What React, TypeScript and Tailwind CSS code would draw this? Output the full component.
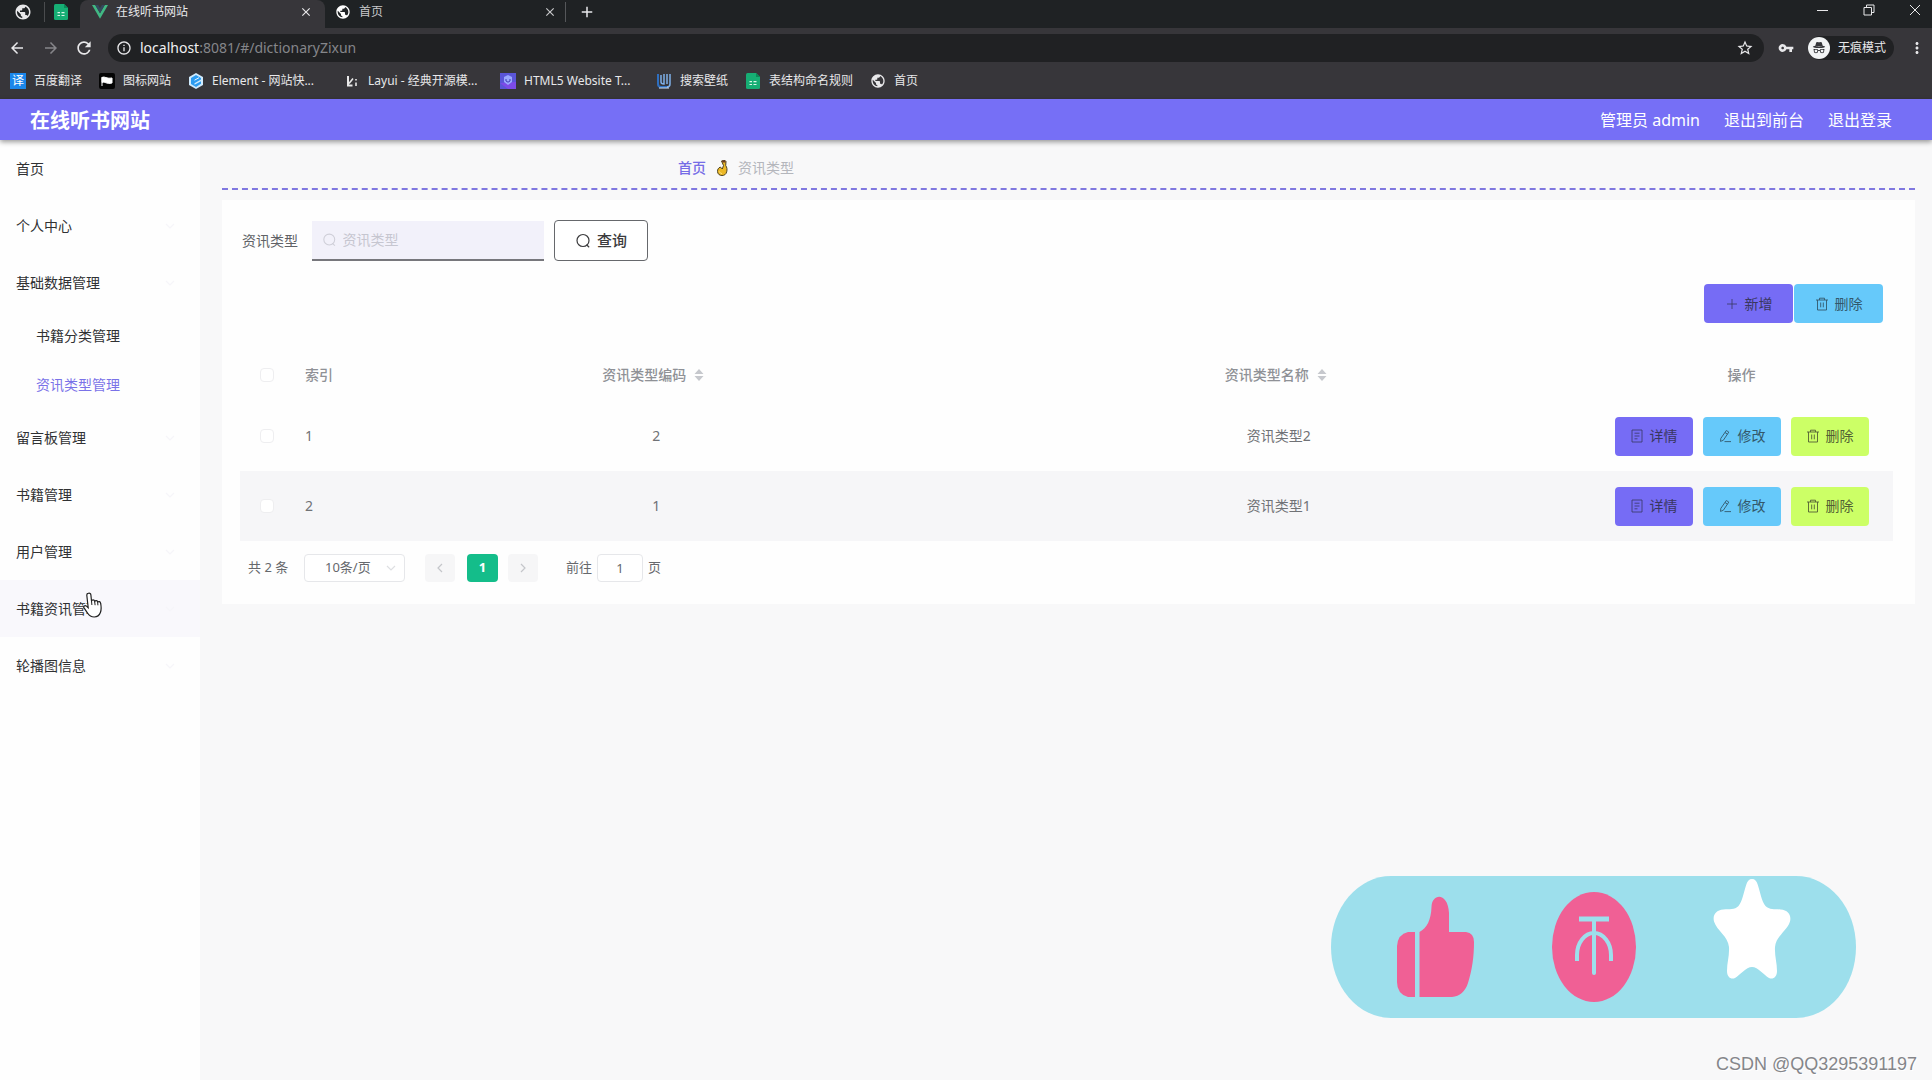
import clsx from 'clsx'
import type { ReactNode } from 'react'
import { BsIncognito } from 'react-icons/bs'
import {
  MdAdd,
  MdArrowBack,
  MdArrowForward,
  MdClose,
  MdInfoOutline,
  MdMoreVert,
  MdPublic,
  MdRefresh,
  MdStarBorder,
  MdVpnKey,
} from 'react-icons/md'

interface IconProps {
  className?: string
}

function VueIcon() {
  return (
    <svg viewBox="0 0 16 14" className="h-3.5 w-4">
      <path d="M0 0h3.2L8 8.3 12.8 0H16L8 13.8z" fill="#41b883" />
      <path d="M3.2 0h2.9L8 3.3 9.9 0h2.9L8 8.3z" fill="#34495e" />
    </svg>
  )
}

function SheetIcon() {
  return (
    <svg viewBox="0 0 16 16" className="size-4">
      <path d="M1 1.5Q1 0 2.500 0H11l4 4v10.500Q15 16 13.500 16h-11Q1 16 1 14.500z" fill="#16ae74" />
      <path d="M4.500 8.700h2.500M8.500 8.700h3M4.500 11.500h2.500M8.500 11.500h3" stroke="#d9f5e8" strokeWidth="1.200" />
      <path d="M11 0l4 4h-4z" fill="#0a8a58" />
    </svg>
  )
}

function FlagIcon() {
  return (
    <svg viewBox="0 0 16 16" className="size-4">
      <rect width="16" height="16" rx="2" fill="#050505" />
      <path d="M3 4v9M3 4.500c3-1.500 4 1.500 10 .5v5C7 11.500 6 8 3 9.500z" fill="#fff" stroke="#fff" />
    </svg>
  )
}

function ElementIcon() {
  return (
    <svg viewBox="0 0 16 16" className="size-4">
      <path d="M8 0l7 4v8l-7 4-7-4V4z" fill="#cfeafd" />
      <path d="M8 2l5 3v1.500L6.500 10.200v1.600L13 8.200v2.600L8 14l-5-3V5z" fill="#2b9bf0" />
      <path d="M6.500 7.200L11 4.700" stroke="#e9f6ff" />
    </svg>
  )
}

function LayuiIcon() {
  return (
    <svg viewBox="0 0 16 16" className="size-4" stroke="#e8e8e8" fill="none">
      <path d="M4 3v9.500h4.500" strokeWidth="2" />
      <path d="M5 10.500l4-5M12 6v1.500M12 9.500v3.500" strokeWidth="1.600" />
    </svg>
  )
}

function HtmlIcon() {
  return (
    <svg viewBox="0 0 16 16" className="size-4">
      <path d="M0 0h16v16H0z" fill="#5a55d8" />
      <path d="M0 10l8 6h8V9z" fill="#7d4be8" />
      <path d="M4 4l4-2 4 2v5l-4 3-4-3z" fill="#9aa8ff" />
      <path d="M6 6v2l2 1.200L10 8V6" stroke="#403bb5" fill="none" />
    </svg>
  )
}

function WallpaperIcon() {
  return (
    <svg viewBox="0 0 16 16" className="size-4" fill="none">
      <path d="M2 1v10q0 3 3 3h7" stroke="#2e6fc0" strokeWidth="2" />
      <path d="M5 2v7q0 2 3 2V1M11 1v10M14 1v10q0 3-3 3" stroke="#7fb0e8" strokeWidth="1.500" />
      <path d="M3 15h10" stroke="#d5e6f8" />
    </svg>
  )
}

function TranslateIcon() {
  return (
    <span className="flex size-4 items-center justify-center bg-[#1b87ea] text-xs leading-4 text-white">
      译
    </span>
  )
}

function SearchIcon({ className }: IconProps) {
  return (
    <svg viewBox="0 0 16 16" className={clsx('size-4', className)} fill="none" stroke="currentColor">
      <circle cx="8" cy="7.500" r="6" strokeWidth="1.200" />
      <path d="M11.500 11.800l2.700 2.500" strokeWidth="1.200" />
    </svg>
  )
}

function PlusIcon() {
  return (
    <svg viewBox="0 0 14 14" className="size-3.5" fill="none" stroke="currentColor">
      <path d="M7 2v10M2 7h10" strokeWidth=".8" />
    </svg>
  )
}

function TrashIcon() {
  return (
    <svg viewBox="0 0 14 14" className="size-3.5" fill="none" stroke="currentColor" strokeWidth=".9">
      <path d="M1 3h12M2.500 3v10h9V3M4.500 3V1.200h5V3M5.700 5.500v4.800M8.300 5.500v4.800" />
    </svg>
  )
}

function DocumentIcon() {
  return (
    <svg viewBox="0 0 14 14" className="size-3.5" fill="none" stroke="currentColor" strokeWidth=".8">
      <path d="M2 1h10v12H2zM4.500 4.200h5M4.500 7h5M4.500 9.800h3" />
    </svg>
  )
}

function EditIcon() {
  return (
    <svg viewBox="0 0 14 14" className="size-3.5" fill="none" stroke="currentColor" strokeWidth=".9">
      <path d="M8.300 1.500l2.500 1.600-5.500 8.200-2.800 1.100.3-3zM7 3.500l2.500 1.600M6.500 12.600H13" />
    </svg>
  )
}

function SortIcon() {
  return (
    <svg viewBox="0 0 10 12" className="h-3 w-2.5 fill-[#c6c8cd]">
      <path d="M5 0l4.500 5h-9zM5 12l4.500-5h-9z" />
    </svg>
  )
}

function ChevronIcon({ className }: IconProps) {
  return (
    <svg viewBox="0 0 12 12" className={clsx('size-3', className)} fill="none" stroke="currentColor">
      <path d="M2 4l4 4 4-4" strokeWidth="1.200" />
    </svg>
  )
}

function PouchIcon() {
  return (
    <svg viewBox="0 0 12 18" className="h-4.5 w-3">
      <path
        d="M5.500 2L9 1.500l1 1-.3 4c1.300 1.800 1.600 4 1 6.300-.7 2.700-2.500 3.700-4.700 3.700-2.500 0-4.300-1.500-4.500-4-.1-2 .8-3.500 2.800-4.500l2 2 1.200-3.500z"
        fill="#ecb826"
        stroke="#4f431f"
      />
      <path d="M3.500 12.500c.3 1.300 1.200 2 2.500 2" stroke="#fbe38a" fill="none" />
      <path d="M6 1.500h3.500v2H6.500z" fill="#6b3a24" />
    </svg>
  )
}

function HandCursor({ className }: IconProps) {
  return (
    <svg viewBox="0 0 20 26" className={className}>
      <path
        d="M5.500 1.200c1.400-.3 2.300.5 2.400 1.800L8.500 9c.5-1.500 2.800-1.500 3.200.3.800-1.200 2.700-.9 3 .7 1-.9 2.700-.4 2.900 1.200.8 3.700.8 6.500-.2 9.300-1.200 3.200-3.200 4.500-6.200 4.500-3.200 0-5-1.300-6.500-3.700L.9 15.600c-.7-1.200 1-2.600 2.300-1.700l2 1.800L3.800 3.200c-.1-1.100.6-1.800 1.700-2z"
        fill="#fff"
        stroke="#222"
        strokeWidth="1.200"
      />
      <path d="M8.500 9l.4 4M11.700 9.600l.4 3.600M14.700 10.300l.2 3" stroke="#222" />
    </svg>
  )
}

function ThumbIcon() {
  return (
    <svg viewBox="0 0 77 101" className="h-[101px] w-[77px]" fill="#f06095">
      <path d="M18 36v65h-7Q0 98 0 86V50Q1 38 11 36z" />
      <path d="M22.500 36C30 32 34 24 34.500 11 35-3 51-4 52 17v19h17q8 1 8 10c0 15-2 28-6 41-3 9-8 13-16 14H22.500z" />
    </svg>
  )
}

function CoinIcon() {
  return (
    <svg viewBox="0 0 84 110" className="h-[110px] w-[84px]">
      <ellipse cx="42" cy="55" rx="42" ry="55" fill="#f06095" />
      <g stroke="#9ddfec" fill="none">
        <path d="M27 27h30" strokeWidth="5" />
        <path d="M42 27v54" strokeWidth="4" strokeLinecap="round" />
        <path d="M25 69v-6a17 22 0 0 1 34 0v6" strokeWidth="4" />
      </g>
    </svg>
  )
}

function StarIcon() {
  return (
    <svg viewBox="0 0 78 102" className="h-[102px] w-[78px]" fill="#fff">
      <path d="M39 1c3 0 4.500 2 5.500 5 3 9 4 17 8 22 4 4 9 3 15 3.500 8 .5 11 6 9.500 12C74 53 63 58 62 69c-.5 9 2 15 2 24 0 6-4 9-8 7-5-3-11-11-17-11s-12 8-17 11c-4 2-8-1-8-7 0-9 2.500-15 2-24C15 58 4 53 1 43.500-.5 37.500 2.500 32 10.500 31.500c6-.5 11 .5 15-3.500 4-5 5-13 8-22 1-3 2.500-5 5.500-5z" />
    </svg>
  )
}

const bookmarks: { label: string; icon: ReactNode; wide?: boolean }[] = [
  { label: '百度翻译', icon: <TranslateIcon /> },
  { label: '图标网站', icon: <FlagIcon /> },
  { label: 'Element - 网站快...', icon: <ElementIcon />, wide: true },
  { label: 'Layui - 经典开源模...', icon: <LayuiIcon />, wide: true },
  { label: 'HTML5 Website T...', icon: <HtmlIcon />, wide: true },
  { label: '搜索壁纸', icon: <WallpaperIcon /> },
  { label: '表结构命名规则', icon: <SheetIcon /> },
  { label: '首页', icon: <MdPublic className="size-4" /> },
]

const menu: { label: string; sub?: boolean; active?: boolean; hover?: boolean; arrow?: boolean }[] = [
  { label: '首页' },
  { label: '个人中心', arrow: true },
  { label: '基础数据管理', arrow: true },
  { label: '书籍分类管理', sub: true },
  { label: '资讯类型管理', sub: true, active: true },
  { label: '留言板管理', arrow: true },
  { label: '书籍管理', arrow: true },
  { label: '用户管理', arrow: true },
  { label: '书籍资讯管理', arrow: true, hover: true },
  { label: '轮播图信息', arrow: true },
]

const rows = [
  { index: 1, code: '2', name: '资讯类型2' },
  { index: 2, code: '1', name: '资讯类型1' },
]

function BrowserChrome() {
  return (
    <div className="bg-[#37363a] text-xs text-[#e8e8ea]">
      {/* Tabs */}
      <div className="flex h-7 items-stretch bg-[#1f2224]">
        <div className="flex w-20 items-center pb-1 pl-3.5">
          <MdPublic className="size-4.5" />
          <span className="ml-3 h-5 w-px bg-[#4a4c4e]" />
          <span className="ml-2">
            <SheetIcon />
          </span>
        </div>
        <div className="flex w-[245px] items-center gap-2 rounded-t-lg bg-[#37363a] pb-1 pl-3 pr-3">
          <VueIcon />
          <span className="flex-1">在线听书网站</span>
          <button aria-label="关闭标签页">
            <MdClose className="size-3.5" />
          </button>
        </div>
        <div className="flex w-[240px] items-center gap-2 pb-1 pl-2.5 pr-2 text-[#c8c9cb]">
          <MdPublic className="size-4 text-white" />
          <span className="flex-1">首页</span>
          <button aria-label="关闭标签页">
            <MdClose className="size-3.5" />
          </button>
        </div>
        <div className="flex flex-1 items-center pb-1">
          <span className="h-5 w-px bg-[#55575a]" />
          <button aria-label="新标签页" className="ml-3">
            <MdAdd className="size-4.5" />
          </button>
        </div>
        <div className="flex h-5 items-center gap-8 pr-2.5">
          <button aria-label="最小化">
            <svg viewBox="0 0 14 14" className="size-3.5" stroke="currentColor">
              <path d="M1 7.500h11" />
            </svg>
          </button>
          <button aria-label="还原">
            <svg viewBox="0 0 14 14" className="size-3.5" stroke="currentColor" fill="none">
              <path d="M2 4.500h7.500V12H2zM4.500 4.500V2H12v7.500H9.500" />
            </svg>
          </button>
          <button aria-label="关闭">
            <svg viewBox="0 0 14 14" className="size-3.5" stroke="currentColor">
              <path d="M2 2l10 10M12 2L2 12" />
            </svg>
          </button>
        </div>
      </div>
      {/* Address bar */}
      <div className="flex h-[39px] items-center pl-2 pr-1.5">
        <button aria-label="后退">
          <MdArrowBack className="size-4.5" />
        </button>
        <button aria-label="前进" className="ml-4 text-[#86868a]">
          <MdArrowForward className="size-4.5" />
        </button>
        <button aria-label="刷新" className="ml-3.5">
          <MdRefresh className="size-5" />
        </button>
        <div className="ml-3.5 flex h-7 flex-1 items-center rounded-full bg-[#202123] pl-2 pr-2.5">
          <MdInfoOutline className="size-4" />
          <span className="ml-2 flex-1 text-sm text-[#85868a]">
            <span className="text-[#f0f0f2]">localhost</span>:8081/#/dictionaryZixun
          </span>
          <MdStarBorder className="size-4.5" />
        </div>
        <MdVpnKey className="ml-3.5 size-4" />
        <div className="ml-3.5 flex h-6 items-center rounded-full bg-[#202123] pr-2">
          <span className="mr-2 flex size-[22px] items-center justify-center rounded-full bg-[#f1f3f4] text-[#35363a]">
            <BsIncognito className="size-3.5" />
          </span>
          无痕模式
        </div>
        <button aria-label="更多" className="ml-3.5">
          <MdMoreVert className="size-4.5" />
        </button>
      </div>
      {/* Bookmarks */}
      <div className="flex h-8 items-start gap-[17px] pl-2.5 pt-1.5">
        {bookmarks.map((item) => (
          <a
            href="#"
            key={item.label}
            className={clsx('flex items-center gap-2 whitespace-nowrap', item.wide && 'w-[139px]')}
          >
            <span className="shrink-0">{item.icon}</span>
            {item.label}
          </a>
        ))}
      </div>
    </div>
  )
}

function Sidebar() {
  return (
    <nav className="w-[200px] shrink-0 bg-[#fefefe] text-sm text-[#303133]">
      {menu.map((item) => (
        <a
          href="#"
          key={item.label}
          className={clsx(
            'relative flex items-center justify-between pr-6',
            item.sub ? 'h-[49px] pl-9' : 'h-[57px] pl-4',
            item.active && 'text-[#7a72e8]',
            item.hover && 'bg-[#f9f8fc]'
          )}
        >
          {item.label}
          {item.arrow && <ChevronIcon className="text-[#f6f5f9]" />}
          {item.hover && <HandCursor className="absolute left-[83px] top-3 h-[26px] w-5" />}
        </a>
      ))}
    </nav>
  )
}

function ActionButton(props: { tone: 'violet' | 'sky' | 'lime'; wide?: boolean; icon: ReactNode; label: string }) {
  return (
    <button
      className={clsx(
        'flex h-[39px] items-center justify-center gap-1.5 rounded text-sm',
        props.wide ? 'w-[89px]' : 'w-[78px]',
        props.tone === 'violet' && 'bg-[#766cf5] text-[#39375f]',
        props.tone === 'sky' && 'bg-[#66c9fa] text-[#33586b]',
        props.tone === 'lime' && 'bg-[#ccff66] text-[#525f35]'
      )}
    >
      {props.icon}
      {props.label}
    </button>
  )
}

function Checkbox({ label }: { label: string }) {
  return (
    <input
      type="checkbox"
      aria-label={label}
      className="block size-3.5 appearance-none rounded-sm border border-[#eeeef0] bg-white"
    />
  )
}

function TypeTable() {
  return (
    <table className="w-full table-fixed text-center text-sm text-[#707276]">
      <colgroup>
        <col className="w-[55px]" />
        <col className="w-[50px]" />
        <col />
        <col />
        <col className="w-[303px]" />
      </colgroup>
      <thead className="text-[#8f9196]">
        <tr className="h-[53px]">
          <th className="pl-5">
            <Checkbox label="全选" />
          </th>
          <th className="pl-2.5 text-left font-medium">索引</th>
          {['资讯类型编码', '资讯类型名称'].map((title) => (
            <th key={title} className="font-medium">
              <div className="flex items-center justify-center gap-2 pr-1.5">
                {title}
                <SortIcon />
              </div>
            </th>
          ))}
          <th className="font-medium">操作</th>
        </tr>
      </thead>
      <tbody>
        {rows.map((row) => (
          <tr key={row.index} className="h-[70px] even:bg-[#f6f6f8]">
            <td className="pl-5">
              <Checkbox label={`选择 ${row.name}`} />
            </td>
            <td className="pl-2.5 text-left">{row.index}</td>
            <td>{row.code}</td>
            <td>{row.name}</td>
            <td>
              <div className="flex justify-center gap-2.5">
                <ActionButton tone="violet" icon={<DocumentIcon />} label="详情" />
                <ActionButton tone="sky" icon={<EditIcon />} label="修改" />
                <ActionButton tone="lime" icon={<TrashIcon />} label="删除" />
              </div>
            </td>
          </tr>
        ))}
      </tbody>
    </table>
  )
}

function Pagination() {
  return (
    <div className="mt-[13px] flex items-center pl-2 text-[13px] text-[#66686c]">
      <span className="w-14">共 2 条</span>
      <div className="relative">
        <select
          aria-label="每页条数"
          className="h-7 w-[101px] appearance-none rounded-sm border border-[#e6e7ea] bg-white pl-5"
        >
          <option>10条/页</option>
        </select>
        <ChevronIcon className="pointer-events-none absolute right-2 top-2 text-[#dedfe2]" />
      </div>
      <button aria-label="上一页" className="ml-5 flex h-7 w-[30px] items-center justify-center rounded-sm bg-[#f6f6f7]">
        <ChevronIcon className="rotate-90 text-[#c4c6ca]" />
      </button>
      <button className="ml-3 h-7 w-[31px] rounded-sm bg-[#14bd8a] font-bold text-white">1</button>
      <button aria-label="下一页" className="ml-2.5 flex h-7 w-[30px] items-center justify-center rounded-sm bg-[#f6f6f7]">
        <ChevronIcon className="-rotate-90 text-[#c4c6ca]" />
      </button>
      <label className="ml-7 flex items-center gap-[5px]">
        前往
        <input
          defaultValue="1"
          className="h-7 w-[46px] rounded-sm border border-[#e6e7ea] bg-white text-center"
        />
        页
      </label>
    </div>
  )
}

export default function App() {
  return (
    <div className="relative flex min-h-screen flex-col bg-[#f8f8f9] font-['Noto_Sans','Noto_Sans_CJK_SC',sans-serif]">
      <BrowserChrome />

      <header className="relative flex h-[41px] items-center justify-between bg-[#766ff6] pl-[30px] pr-10 text-white shadow-[0_2px_5px_rgba(0,0,0,0.4)]">
        <h1 className="pt-0.5 text-xl font-bold">在线听书网站</h1>
        <div className="flex gap-6 text-base">
          <span>管理员 admin</span>
          <a href="#">退出到前台</a>
          <a href="#">退出登录</a>
        </div>
      </header>

      <div className="flex flex-1">
        <Sidebar />
        <main className="flex-1 pl-[22px] pr-[17px]">
          {/* Breadcrumb */}
          <div className="flex h-[50px] items-center gap-2.5 border-b-2 border-dashed border-[#8078e0] pl-[456px] pt-2 text-sm">
            <a href="#" className="font-medium text-[#756ce6]">
              首页
            </a>
            <PouchIcon />
            <span className="text-[#b4b6bc]">资讯类型</span>
          </div>

          <section className="mt-2.5 bg-[#fefefe] pb-[22px] pl-[18px] pr-[22px] pt-5">
            <form className="flex items-center pl-0.5 text-sm">
              <label htmlFor="type-name" className="text-[#606266]">
                资讯类型
              </label>
              <div className="ml-3.5 flex h-10 w-[232px] items-center gap-1.5 border-b-2 border-[#77777c] bg-[#f2f1fa] pl-2.5">
                <SearchIcon className="text-[#cfcfd8]" />
                <input
                  id="type-name"
                  placeholder="资讯类型"
                  className="w-full bg-transparent placeholder:text-[#c6c6d0] focus:outline-none"
                />
              </div>
              <button
                type="button"
                className="ml-2.5 flex h-[41px] w-[94px] items-center justify-center gap-1.5 rounded border border-[#66686c] bg-white text-[15px] font-medium text-[#3c3c3e]"
              >
                <SearchIcon />
                查询
              </button>
            </form>

            <div className="mb-[25px] mt-[23px] flex justify-end gap-px pr-2.5">
              <ActionButton tone="violet" wide icon={<PlusIcon />} label="新增" />
              <ActionButton tone="sky" wide icon={<TrashIcon />} label="删除" />
            </div>

            <TypeTable />
            <Pagination />
          </section>
        </main>
      </div>

      {/* Floating sticker */}
      <div className="absolute bottom-[62px] right-[76px] flex h-[142px] w-[525px] justify-between rounded-[60px/71px] bg-[#9ddfec] pl-[66px] pr-[65px]">
        <div className="pt-5">
          <ThumbIcon />
        </div>
        <div className="pt-4">
          <CoinIcon />
        </div>
        <div className="pt-0.5">
          <StarIcon />
        </div>
      </div>
      <div className="absolute bottom-1 right-[15px] font-['Liberation_Sans',sans-serif] text-lg leading-6 text-[#85868a] [text-shadow:1px_1px_0_#fff]">
        CSDN @QQ3295391197
      </div>
    </div>
  )
}
